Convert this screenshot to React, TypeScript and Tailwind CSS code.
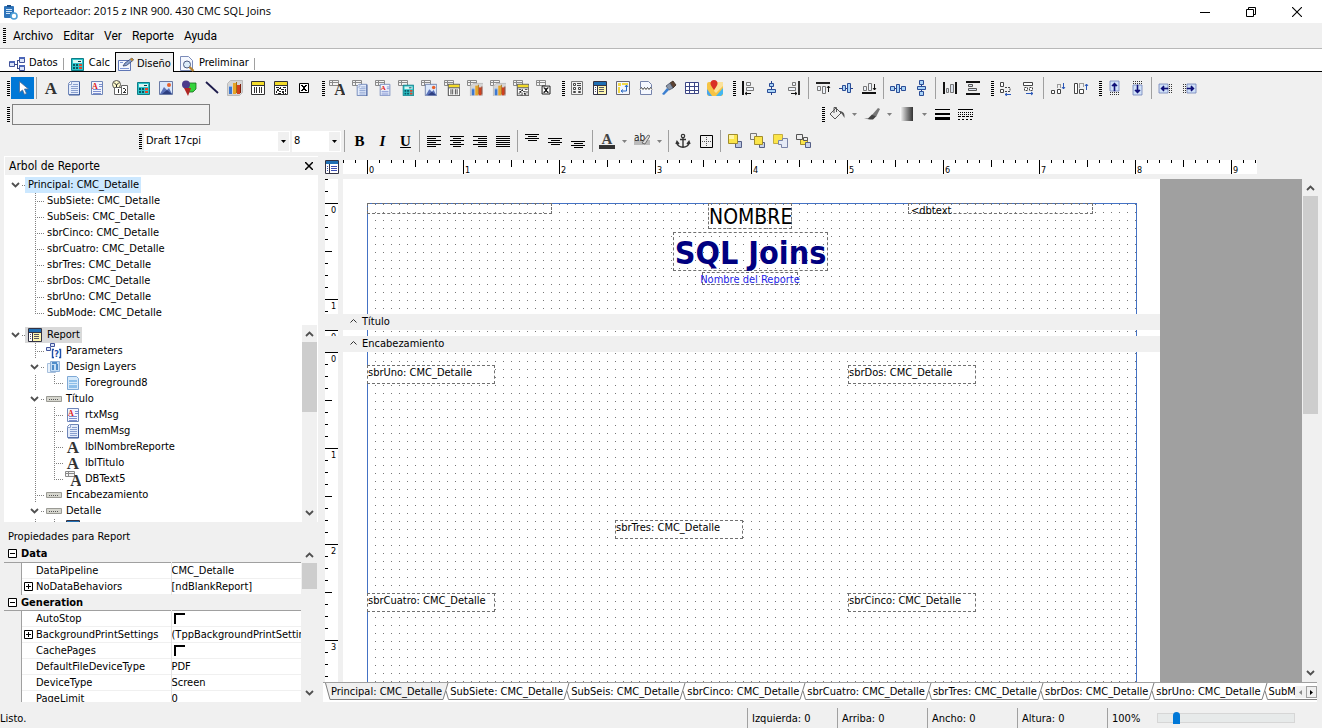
import type { ReactNode } from "react";
import clsx from "clsx";

const TAHOMA = "font-['DejaVu_Sans_Condensed','DejaVu_Sans',sans-serif]";
const SEGOE = "font-['Roboto','Noto_Sans',sans-serif]";

/* ---------- icons ---------- */

const letterA = (
  <text x="8" y="14" textAnchor="middle" fontSize="17" fontWeight="700" fontFamily="Liberation Serif, serif" fill="#333">A</text>
);

const page = (
  <>
    <path d="M4.500 1.500h9v13h-11v-11z" fill="#e4ecfb" stroke="#6f86b8" />
    <path d="M13.500 2v13H3" fill="none" stroke="#3f5c9c" />
    <path d="M2.500 4.500h3v-3" fill="#fff" stroke="#8fa3cc" />
  </>
);

const memo = (
  <>
    {page}
    <path d="M7 4.500h5M5 6.500h7M5 8.500h7M5 10.500h7M5 12.500h7" stroke="#8aa0cf" />
  </>
);

const rich = (
  <>
    <path d="M2.500 1.500h11v13h-11z" fill="#f2f5fd" stroke="#6f86b8" />
    <text x="6" y="8.500" textAnchor="middle" fontSize="8" fontWeight="700" fontFamily="Liberation Serif, serif" fill="#e01818">A</text>
    <path d="M10 4.500h3M10 6.500h3M4 9.500h8M4 11.500h8M4 13.500h8" stroke="#7d8fd0" />
  </>
);

const calc = (
  <>
    <path d="M2.500 2.500h12v12h-12z" fill="#2cc3c9" stroke="#0d7d87" />
    <path d="M4 4h9v3H4z" fill="#d8f5f2" />
    <path d="M9 5h3v1H9z" fill="#134" />
    <path d="M4 8h2v2H4zM7 8h2v2H7zM4 11h2v2H4zM7 11h2v2H7z" fill="#075763" />
    <path d="M10 8h3v2h-3zM10 11h3v2h-3z" fill="#e0472c" />
  </>
);

const image = (
  <>
    <path d="M1.500 1.500h13v13h-13z" fill="#dbe8fb" stroke="#6a7ba6" />
    <path d="M2 14l4-7 3 3 2-2 3 6z" fill="#5b72b8" />
    <path d="M4 14l5-4 5 4z" fill="#2d3f80" />
    <circle cx="11" cy="5" r="2" fill="#e8622c" />
  </>
);

const chart = (
  <>
    <path d="M.5 3.500l3-3h12v12l-3 3H.5z" fill="#d5d5d5" stroke="#bbb" />
    <path d="M2 7h3v7H2z" fill="#3d78d0" />
    <path d="M2 6h3v1H2z" fill="#8fb8ee" />
    <path d="M6 3h3v11H6z" fill="#e8a526" />
    <path d="M9 2h1v11H9z" fill="#a66d0c" />
    <path d="M10 5h3v9h-3z" fill="#d0411e" />
    <path d="M13 4h1v9h-1z" fill="#7e200b" />
  </>
);

const barcode = (
  <>
    <path d="M1.500 1.500h13v13h-13z" fill="#fff" stroke="#333" />
    <path d="M2 2h12v3H2z" fill="#f4dc2a" />
    <path d="M2 5.500h12M4.500 7v6M6.500 7v6M9.500 7v6M11.500 7v6" stroke="#333" fill="none" />
  </>
);

const barcode2d = (
  <>
    <path d="M1.500 1.500h13v13h-13z" fill="#fff" stroke="#333" />
    <path d="M2 2h12v3H2z" fill="#f4dc2a" />
    <path d="M2 5.500h12" stroke="#333" />
    <path d="M3 7h3v1H3zM7 7h1v2H7zM10 7h3v1h-3zM4 9h2v2H4zM8 9h3v1H8zM12 9h1v3h-1zM3 11h1v2H3zM6 11h2v1H6zM9 11h2v2H9zM5 13h3v1H5zM12 13h1v1h-1zM10 13h1v1h-1zM6 8h1v1H6z" fill="#222" />
  </>
);

const boxX = (
  <>
    <path d="M3.500 3.500h9v9h-9z" fill="#fff" stroke="#000" />
    <path d="M5 5h2v1H5zM9 5h2v1H9zM6 6h4v1H6zM7 7h2v2H7zM6 9h4v1H6zM5 10h2v1H5zM9 10h2v1H9z" fill="#000" />
  </>
);

const db = (base: ReactNode) => (
  <>
    <path d="M.5 .5h9v5h-9zM.5 2.500h9M3.500 1v4" fill="#f4f4f4" stroke="#8a8a8a" />
    <g transform="translate(3 3) scale(.88)">{base}</g>
  </>
);

const reportSheet = (
  <>
    <path d="M1.500 1.500h13v13h-13z" fill="#fdf6b0" stroke="#334" />
    <path d="M2 2h12v3H2z" fill="#1f6fb4" />
    <path d="M2 5.500h12M5.500 5v9" stroke="#334" />
    <path d="M2 6h3v8H2z" fill="#fff" />
    <path d="M7 7.500h5M7 9.500h5M7 11.500h5M3 7.500h1M3 9.500h1M3 11.500h1" stroke="#556" />
  </>
);

const blueSheet = (
  <>
    <path d="M1.500 1.500h13v13h-13z" fill="#fff" stroke="#334" />
    <path d="M2 2h12v3H2z" fill="#1f6fb4" />
    <path d="M5.500 5v9" stroke="#334" />
    <path d="M7 7.500h6M7 9.500h6M7 11.500h6M3 7.500h1M3 9.500h1M3 11.500h1" stroke="#3c4fb5" />
  </>
);

const tinyBox = "#a9d3f7";

const icons: Record<string, ReactNode> = {
  pointer: <path d="M5.500 1.500v11l3-2.500 2 4.500 2-1-2-4.500h4z" fill="#fff" stroke="#4c6a92" strokeWidth=".8" />,
  label: letterA,
  memo,
  rich,
  variable: (
    <>
      <circle cx="4.500" cy="4.500" r="4" fill="#fdf9c9" stroke="#555" />
      <path d="M4.500 7V5L2 2.500M4.500 5L7 2.500" stroke="#222" fill="none" />
      <path d="M2.500 7.500h7v7h-7zM9.500 5.500h6v9h-6z" fill="#fff" stroke="#666" />
      <path d="M6 9h1v4H6zM11 8h2v1h-2zM13 9h1v2h-1zM12 11h1v1h-1zM11 12h3v1h-3z" fill="#333" />
    </>
  ),
  calc,
  image,
  shape: (
    <>
      <path d="M7 3h8v6l-3 3H7z" fill="#35d43c" stroke="#186b1c" strokeWidth=".8" />
      <circle cx="5" cy="4.500" r="4" fill="#4b3a8c" />
      <path d="M3 8h7l-3 8z" fill="#b02525" />
    </>
  ),
  line: <path d="M2 2l12 11" stroke="#1d1b4c" strokeWidth="1.800" />,
  chart,
  barcode,
  barcode2d,
  boxX,
  dbLabel: db(<text x="9" y="14" textAnchor="middle" fontSize="18" fontWeight="700" fontFamily="Liberation Serif, serif" fill="#333">A</text>),
  dbMemo: db(memo),
  dbRich: db(rich),
  dbCalc: db(calc),
  dbImage: db(image),
  dbBarcode: db(barcode),
  dbChart: db(chart),
  db2d: db(barcode2d),
  dbBox: db(boxX),
  region: (
    <>
      <path d="M2.500 1.500h11v13h-11z" fill="#f2f2f2" stroke="#777" />
      <path d="M4.500 3.500h2v2h-2zM4.500 7.500h2v2h-2zM9.500 7.500h2v2h-2zM4.500 11.500h2v1h-2zM9.500 11.500h2v1h-2z" fill="#fff" stroke="#444" />
      <path d="M8 3.500h4M8 5.500h4" stroke="#444" />
    </>
  ),
  reportSheet,
  blueSheet,
  crosstab: (
    <>
      <path d="M1.500 1.500h13v13h-13z" fill="#f3f6fd" stroke="#667" />
      <path d="M3 3h3v3H3zM7 3h6v2H7zM3 7h2v6H3z" fill="#f2d848" />
      <path d="M11.500 5v6h-5M10 7l1.500-2L13 7M8 9.500L6 11l2 1.500" stroke="#2668c4" fill="none" />
    </>
  ),
  pageBreak: (
    <>
      <path d="M2.500 1.500h8l3 3v10h-11z" fill="#f5f8ff" stroke="#7583ab" />
      <path d="M2 8h12v2H2z" fill="#fff" />
      <path d="M2 9.500l1.500-2 1.500 2 1.500-2 1.500 2 1.500-2 1.500 2 1.500-2 1.500 2" stroke="#333" fill="none" strokeWidth=".9" />
    </>
  ),
  brush: (
    <>
      <path d="M9 3l3-2 3 4-3 3z" fill="#5d4332" stroke="#33241a" strokeWidth=".8" />
      <path d="M5 6l4-3 3 5-4 2z" fill="#8b96a8" stroke="#4a5363" strokeWidth=".8" />
      <path d="M6 8l2 2-5 5-2-1z" fill="#3b7fd0" />
    </>
  ),
  grid: <path d="M1.500 2.500h13v11h-13zM1.500 6.500h13M1.500 10.500h13M5.500 2.500v11M10.500 2.500v11" fill="#fff" stroke="#3c4685" />,
  map: (
    <>
      <rect x="0" y="2" width="16" height="14" rx="2" fill="#f6c445" />
      <path d="M9 16l7-8v6l-2 2z" fill="#43b7f0" />
      <path d="M0 9l5 7H2l-2-2z" fill="#48a6ee" />
      <path d="M10 2h6v4l-7 7-2-2z" fill="#fbe29a" />
      <path d="M7 10C4.500 6.500 3.500 5 3.500 3.500a3.500 3.500 0 017 0C10.500 5 9.500 6.500 7 10z" fill="#d93025" />
    </>
  ),
  alignLeft: (
    <>
      <path d="M2 1h2v14H2z" fill="#111" />
      <path d="M6.500 2.500h4v3h-4zM6.500 7.500h7v3h-7z" fill="#eef3fa" stroke="#777" />
      <path d="M5 13.500h6M7 12l-2 1.500L7 15" stroke="#111" fill="none" />
    </>
  ),
  alignMid: (
    <>
      <path d="M8 1h1v14H8z" fill="#24428c" />
      <path d="M6.500 3.500h4v3h-4zM4.500 9.500h8v3h-8z" fill={tinyBox} stroke="#2a4c96" />
    </>
  ),
  alignRight: (
    <>
      <path d="M12 1h2v14h-2z" fill="#333" />
      <path d="M6.500 2.500h3v3h-3zM2.500 7.500h7v3h-7z" fill="#eef3fa" stroke="#777" />
      <path d="M5 13.500h6M9 12l2 1.500L9 15" stroke="#111" fill="none" />
    </>
  ),
  alignTop: (
    <>
      <path d="M1 2h14v2H1z" fill="#222" />
      <path d="M2.500 6.500h3v4h-3zM7.500 6.500h3v7h-3z" fill="#eef3fa" stroke="#777" />
      <path d="M13.500 6v6M12 8l1.500-2L15 8" stroke="#111" fill="none" />
    </>
  ),
  alignCenterV: (
    <>
      <path d="M1 8h14v1H1z" fill="#24428c" />
      <path d="M4.500 5.500h3v5h-3zM9.500 3.500h3v9h-3z" fill={tinyBox} stroke="#2a4c96" />
    </>
  ),
  alignBottom: (
    <>
      <path d="M1 12h14v2H1z" fill="#111" />
      <path d="M2.500 6.500h3v4h-3zM7.500 3.500h3v7h-3z" fill="#eef3fa" stroke="#777" />
      <path d="M13.500 4v6M12 8l1.500 2L15 8" stroke="#111" fill="none" />
    </>
  ),
  centerH: (
    <>
      <path d="M1 8h14v1H1z" fill="#24428c" />
      <path d="M.5 6.500h4v4h-4zM6.500 4.500h3v8h-3zM11.500 6.500h4v4h-4z" fill={tinyBox} stroke="#2a4c96" />
    </>
  ),
  centerV: (
    <>
      <path d="M8 1h1v14H8z" fill="#24428c" />
      <path d="M6.500 .5h4v4h-4zM4.500 6.500h8v3h-8zM6.500 11.500h4v4h-4z" fill={tinyBox} stroke="#2a4c96" />
    </>
  ),
  spaceH: (
    <>
      <path d="M1 2h2v12H1zM13 2h2v12h-2z" fill="#111" />
      <path d="M4.500 8.500h2v4h-2zM8.500 4.500h3v8h-3z" fill="#dbe3ef" stroke="#777" />
    </>
  ),
  spaceV: (
    <>
      <path d="M1 1h14v2H1zM1 13h14v2H1z" fill="#111" />
      <path d="M3.500 4.500h4v2h-4zM3.500 8.500h8v2h-8z" fill="#dbe3ef" stroke="#555" />
    </>
  ),
  sameWidth: (
    <>
      <path d="M2.500 2.500h3v4h-3zM2.500 9.500h3v3h-3z" fill="#fff" stroke="#444" />
      <path d="M7 7.500h5v4H7" fill="none" stroke="#444" strokeDasharray="2 1" />
      <path d="M7 14.500h6M9 13l-2 1.500L9 16" stroke="#2a57b8" fill="none" />
    </>
  ),
  sameWidth2: (
    <>
      <path d="M2.500 2.500h9v3h-9z" fill="#fff" stroke="#444" />
      <path d="M3.500 7.500h3v3h-3zM8.500 7.500h3v3h-3z" fill="#fff" stroke="#444" strokeDasharray="2 1" />
      <path d="M5 13.500h7M10 12l2 1.500-2 1.500" stroke="#2a57b8" fill="none" />
    </>
  ),
  sameHeight: (
    <>
      <path d="M1.500 10.500h3v3h-3zM7.500 9.500h3v4h-3z" fill="#fff" stroke="#444" />
      <path d="M7.500 7.500v-3h3v3" fill="none" stroke="#444" strokeDasharray="1 1" />
      <path d="M13.500 3v6M12 7l1.500 2L15 7" stroke="#2a57b8" fill="none" />
    </>
  ),
  sameHeight2: (
    <>
      <path d="M1.500 3.500h3v10h-3zM6.500 9.500h4v4h-4z" fill="#fff" stroke="#444" />
      <path d="M6.500 7.500v-4h4v4" fill="none" stroke="#444" strokeDasharray="1 1" />
      <path d="M13.500 4v6M12 6l1.500-2L15 6" stroke="#2a57b8" fill="none" />
    </>
  ),
  nudgeUp: (
    <>
      <path d="M4 1h9v10H4z" fill="#cfe0f7" stroke="#6f82b8" strokeWidth=".8" />
      <path d="M4 12.500h9M4 14.500h9" stroke="#333" strokeDasharray="1 1" />
      <path d="M8 5h1v6H8zM7 4h3v1H7zM6 5h5v1H6zM8 3h1v1H8z" fill="#10107a" stroke="#10107a" strokeWidth=".6" />
    </>
  ),
  nudgeDown: (
    <>
      <path d="M4 5h9v10H4z" fill="#cfe0f7" stroke="#6f82b8" strokeWidth=".8" />
      <path d="M4 1.500h9M4 3.500h9" stroke="#333" strokeDasharray="1 1" />
      <path d="M8 5h1v6H8zM6 10h5v1H6zM7 11h3v1H7zM8 12h1v1H8z" fill="#10107a" stroke="#10107a" strokeWidth=".6" />
    </>
  ),
  nudgeLeft: (
    <>
      <path d="M1 4h9v9H1z" fill="#cfe0f7" stroke="#6f82b8" strokeWidth=".8" />
      <path d="M11.500 4v9M13.500 4v9" stroke="#333" strokeDasharray="1 1" />
      <path d="M4 8h6v1H4zM4 7h1v3H4zM5 6h1v5H5zM3 8h1v1H3z" fill="#10107a" stroke="#10107a" strokeWidth=".6" />
    </>
  ),
  nudgeRight: (
    <>
      <path d="M6 4h9v9H6z" fill="#cfe0f7" stroke="#6f82b8" strokeWidth=".8" />
      <path d="M2.500 4v9M4.500 4v9" stroke="#333" strokeDasharray="1 1" />
      <path d="M6 8h6v1H6zM11 7h1v3h-1zM10 6h1v5h-1zM12 8h1v1h-1z" fill="#10107a" stroke="#10107a" strokeWidth=".6" />
    </>
  ),
  bucket: (
    <>
      <path d="M1 8l6-6 5 5-6 6z" fill="#eee" stroke="#555" />
      <path d="M5 7V1.500h2.500V6" fill="none" stroke="#555" />
      <path d="M10 5c4 0 6 2 5.500 7L13 8z" fill="#555" />
    </>
  ),
  pen: (
    <>
      <path d="M8 9l6-7 2 1-4 8z" fill="#777" />
      <path d="M0 12.500h4l4-4 4 2-3 3H6z" fill="#444" />
    </>
  ),
  lines: <path d="M1 3h15v1H1zM1 7h15v2H1zM1 11h15v3H1z" fill="#000" />,
  dashes: (
    <>
      <path d="M1 3h15v1H1z" fill="#000" />
      <path d="M1 6.500h15M1 8.500h15" stroke="#000" strokeDasharray="1 1" />
      <path d="M1 10.500h15" stroke="#000" strokeDasharray="3 1" />
      <path d="M1 13.500h15" stroke="#000" strokeDasharray="2 2" />
    </>
  ),
  textLeft: <path d="M1 3.500h14M1 5.500h9M1 7.500h14M1 9.500h9M1 11.500h14M1 13.500h9" stroke="#000" />,
  textCenter: <path d="M1 3.500h14M4 5.500h8M1 7.500h14M4 9.500h8M1 11.500h14M4 13.500h8" stroke="#000" />,
  textRight: <path d="M1 3.500h14M6 5.500h9M1 7.500h14M6 9.500h9M1 11.500h14M6 13.500h9" stroke="#000" />,
  textFull: <path d="M1 3.500h14M1 5.500h14M1 7.500h14M1 9.500h14M1 11.500h14M1 13.500h14" stroke="#000" />,
  vTop: <path d="M1 1.500h14M4 3.500h9M1 5.500h14M4 7.500h9" stroke="#000" />,
  vMid: <path d="M1 5.500h14M4 7.500h9M1 9.500h14M4 11.500h9" stroke="#000" />,
  vBottom: <path d="M1 8.500h14M4 10.500h9M1 12.500h14M4 14.500h9" stroke="#000" />,
  fontColor: (
    <>
      <text x="8" y="11" textAnchor="middle" fontSize="15" fontWeight="700" fontFamily="Liberation Serif, serif" fill="#444">A</text>
      <path d="M0 12h16v4H0z" fill="#333" />
    </>
  ),
  highlight: (
    <>
      <path d="M0 7h16v5H0z" fill="#bbb" />
      <text x="0" y="8" fontSize="10" fontFamily="DejaVu Sans Condensed, sans-serif" fill="#222">ab</text>
      <path d="M8 10l6-8 2 1-5 8z" fill="#ddd" stroke="#555" strokeWidth=".8" />
    </>
  ),
  anchor: (
    <>
      <circle cx="8" cy="3" r="1.700" fill="none" stroke="#333" strokeWidth="1.200" />
      <path d="M8 5v9M5 6.500h6M2 9.500c0 3 3 4.800 6 4.800s6-1.800 6-4.800M1 11l1-2.500L4 11M12 11l2-2.500 1 2.500" fill="none" stroke="#333" strokeWidth="1.400" />
    </>
  ),
  border: (
    <>
      <path d="M2.500 2.500h12v12h-12z" fill="none" stroke="#000" />
      <path d="M8.500 4v9M4 8.500h9" stroke="#555" strokeDasharray="1 1" />
    </>
  ),
  toFront: (
    <>
      <path d="M8.500 8.500h6v6h-6z" fill="#b9c4e2" stroke="#555f86" />
      <path d="M1.500 1.500h9v9h-9z" fill="#fbe54a" stroke="#a08c2c" />
      <path d="M2 2h5v4H2z" fill="#fff6a8" />
    </>
  ),
  toBack: (
    <>
      <path d="M.5 .5h6v6h-6z" fill="#eee" stroke="#777" />
      <path d="M9.500 9.500h5v5h-5z" fill="#c9d3ea" stroke="#555f86" />
      <path d="M4.500 3.500h8v8h-8z" fill="#fbe54a" stroke="#a08c2c" />
    </>
  ),
  forward: (
    <>
      <path d="M.5 1.500h9v9h-9z" fill="#fbe54a" stroke="#c4ad40" />
      <path d="M5.500 7.500h4v-2h5v9h-6v-3h-3z" fill="#e6ebf6" stroke="#7a84a8" />
    </>
  ),
  backward: (
    <>
      <path d="M4.500 5.500h7v6h-7z" fill="#fbe54a" stroke="#a08c2c" />
      <path d="M.5 1.500h6v5h-6zM7.500 4.500h4v3h-4z" fill="#eee" stroke="#555" />
      <path d="M9.500 9.500h5v5h-5z" fill="#c9d3ea" stroke="#555f86" />
    </>
  ),
  data: (
    <>
      <path d="M6 8.500h3M8.500 4v9M8 4.500h2M8 12.500h2" stroke="#3a4a86" fill="none" />
      <path d="M.5 5.500h5v5h-5zM10.500 1.500h5v5h-5zM10.500 9.500h5v5h-5z" fill="#dce6fa" stroke="#41539a" />
      <path d="M1 5h5v2H1zM10 1h6v2h-6zM10 9h6v2h-6z" fill="#4c66b8" />
    </>
  ),
  design: (
    <>
      <path d="M.5 3.500h12v10H.5z" fill="#f3f7ff" stroke="#5f76b5" />
      <path d="M2 11.500h9M2 5.500h3" stroke="#7f97d4" />
      <path d="M5 9l2-3 7-5 1.500 2-7 5.500z" fill="#8aa2cf" stroke="#34446f" strokeWidth=".8" />
      <path d="M12 2l2-1 1.500 2-2 1z" fill="#c38a2b" />
    </>
  ),
  preview: (
    <>
      <path d="M1.500 .5h8l4 4v10h-12z" fill="#f5f8ff" stroke="#7b8bb8" />
      <circle cx="8" cy="8.500" r="3.500" fill="#dcecf9" stroke="#4b5a80" />
      <path d="M10.500 11l4 4" stroke="#b7832f" strokeWidth="2.400" />
    </>
  ),
  app: (
    <>
      <rect x="2" y="2" width="10" height="12" rx="1" fill="#2f74ba" />
      <path d="M5 1h4v2H5z" fill="#1b4f8a" />
      <path d="M4 5h6v1H4zM4 7h6v1H4zM4 9h4v1H4z" fill="#cfe5f8" />
      <circle cx="12" cy="12" r="3" fill="#fff" stroke="#4e9fd6" strokeWidth="1.600" />
    </>
  ),
  params: (
    <>
      <path d="M4.500 .5h4v3h-4zM.5 4.500h4v3h-4z" fill="#dce6fa" stroke="#41539a" />
      <path d="M8 6.500H6.500v8H8M13 6.500h1.500v8H13" fill="none" stroke="#1e4fa8" strokeWidth="1.400" />
      <text x="10.500" y="13.500" textAnchor="middle" fontSize="9" fontWeight="700" fontFamily="DejaVu Sans Condensed, sans-serif" fill="#1e4fa8">?</text>
    </>
  ),
  layers: (
    <>
      <path d="M1.500 4.500h8v9h-8z" fill="#e8f2fc" stroke="#a7bfdc" />
      <path d="M4.500 2.500h9v10h-9z" fill="#c5def5" stroke="#8fb1d8" />
      <path d="M6 6h2v5H6zM10 5h2v6h-2zM6 3h5v2H6z" fill="#4f8cc9" />
    </>
  ),
  layer: (
    <>
      <path d="M2.500 1.500h9l2 2v11h-11z" fill="#d5e9fa" stroke="#7fa9d6" />
      <path d="M4 5h8v8H4z" fill="#8ebfe9" />
      <path d="M4 7.500h8M4 9.500h8" stroke="#d5e9fa" />
    </>
  ),
  band: (
    <>
      <path d="M.5 5.500h15v5H.5z" fill="#d6d6ce" stroke="#9a9a94" />
      <path d="M3 8.500h9" stroke="#555" strokeDasharray="1 1" />
    </>
  ),
};

function Icon({ name, className }: { name: string; className?: string }) {
  return (
    <svg width="16" height="16" viewBox="0 0 16 16" className={clsx("shrink-0", className)} aria-hidden="true">
      {icons[name]}
    </svg>
  );
}

function Chevron({ dir = "down", className }: { dir?: "up" | "down"; className?: string }) {
  return (
    <svg width="9" height="9" viewBox="0 0 9 9" className={className} aria-hidden="true">
      <path d={dir === "down" ? "M1 2l3.500 3.500L8 2" : "M1 7l3.500-3.500L8 7"} fill="none" stroke="#505050" strokeWidth="1.800" />
    </svg>
  );
}

/* ---------- toolbar parts ---------- */

function Grip({ narrow }: { narrow?: boolean }) {
  return (
    <span className={clsx("flex shrink-0 justify-end pr-px", narrow ? "w-[7px]" : "w-[10px]")}>
      <span className="h-[15px] w-[3px] bg-[repeating-linear-gradient(#000_0_1px,transparent_1px_2px)]" />
    </span>
  );
}

function Separator() {
  return (
    <span className="flex w-1.5 shrink-0 pl-0.5">
      <span className="h-[22px] w-px bg-[#a0a0a0]" />
    </span>
  );
}

function ToolButton({ icon, active }: { icon: string; active?: boolean }) {
  return (
    <button type="button" aria-label={icon} className={clsx("flex h-[22px] w-[23px] shrink-0 items-center pl-[3px]", active && "bg-[#0078d7]")}>
      <Icon name={icon} />
    </button>
  );
}

function DropArrow({ label }: { label: string }) {
  return (
    <button type="button" aria-label={label} className="flex h-[22px] w-3 shrink-0 items-center pl-[3px]">
      <svg width="5" height="3" viewBox="0 0 5 3"><path d="M0 0h5L2.500 3z" fill="#808080" /></svg>
    </button>
  );
}

function Tools({ items }: { items: string }) {
  return (
    <>
      {items.split(" ").map((item, i) => {
        if (item === ":") return <Grip key={i} />;
        if (item === "|") return <Separator key={i} />;
        if (item === "v") return <DropArrow key={i} label="Opciones" />;
        return <ToolButton key={i} icon={item} active={item === "pointer"} />;
      })}
    </>
  );
}

function Combo({ label, value, className }: { label: string; value: string; className: string }) {
  return (
    <div className={clsx("relative h-[21px] shrink-0 bg-white", className)}>
      <select aria-label={label} defaultValue={value} className="h-full w-full appearance-none pl-0.5 leading-[20px] text-black outline-none">
        <option>{value}</option>
      </select>
      <span className="pointer-events-none absolute inset-y-px right-px flex w-[11px] items-center justify-center bg-[#f0f0f0]">
        <svg width="5" height="3" viewBox="0 0 5 3"><path d="M0 0h5L2.500 3z" fill="#000" /></svg>
      </span>
    </div>
  );
}

function TextStyle({ label, children }: { label: string; children: ReactNode }) {
  return (
    <button type="button" aria-label={label} className="h-[22px] w-[23px] shrink-0 text-center [font-family:'Liberation_Serif',serif] text-[15px] leading-[22px] font-bold">
      {children}
    </button>
  );
}

function ScrollBar({ thumb, className }: { thumb: string; className?: string }) {
  return (
    <div className={clsx("flex w-[15px] shrink-0 flex-col items-center bg-[#f0f0f0]", className)}>
      <Chevron dir="up" className="my-1 shrink-0" />
      <div className={clsx("w-full shrink-0 bg-[#cdcdcd]", thumb)} />
      <Chevron className="mt-auto mb-1 shrink-0" />
    </div>
  );
}

/* ---------- trees ---------- */

type Guide = "none" | "line" | "tee" | "end" | "open";

function GuideCell({ kind }: { kind: Guide }) {
  if (kind === "open") {
    return (
      <span className="flex h-4 w-[19px] shrink-0 items-center">
        <Chevron className="ml-[5px]" />
        <svg width="4" height="1" className="ml-auto"><path d="M1 .5h3" stroke="#808080" strokeDasharray="1 1" /></svg>
      </span>
    );
  }
  return (
    <svg width="19" height="16" className="shrink-0">
      {kind !== "none" && <path d={kind === "end" ? "M10.500 0v8" : "M10.500 0v16"} stroke="#808080" strokeDasharray="1 1" />}
      {(kind === "tee" || kind === "end") && <path d="M10 8.500h9" stroke="#808080" strokeDasharray="1 1" />}
    </svg>
  );
}

interface Node {
  text: string;
  guides: Guide[];
  icon?: string;
  highlight?: string;
}

const subReports: Node[] = [
  { text: "Principal: CMC_Detalle", guides: ["open"], highlight: "bg-[#cce8ff]" },
  ...["SubSiete", "SubSeis", "sbrCinco", "sbrCuatro", "sbrTres", "sbrDos", "sbrUno"].map((n) => ({
    text: `${n}: CMC_Detalle`,
    guides: ["none", "tee"] as Guide[],
  })),
  { text: "SubMode: CMC_Detalle", guides: ["none", "end"] },
];

const components: Node[] = [
  { text: "Report", guides: ["open"], icon: "reportSheet", highlight: "bg-[#d9d9d9]" },
  { text: "Parameters", guides: ["none", "tee"], icon: "params" },
  { text: "Design Layers", guides: ["none", "open"], icon: "layers" },
  { text: "Foreground8", guides: ["none", "line", "end"], icon: "layer" },
  { text: "Título", guides: ["none", "open"], icon: "band" },
  { text: "rtxMsg", guides: ["none", "line", "tee"], icon: "rich" },
  { text: "memMsg", guides: ["none", "line", "tee"], icon: "memo" },
  { text: "lblNombreReporte", guides: ["none", "line", "tee"], icon: "label" },
  { text: "lblTitulo", guides: ["none", "line", "tee"], icon: "label" },
  { text: "DBText5", guides: ["none", "line", "end"], icon: "dbLabel" },
  { text: "Encabezamiento", guides: ["none", "tee"], icon: "band" },
  { text: "Detalle", guides: ["none", "open"], icon: "band" },
  { text: "sbrUno", guides: ["none", "line", "tee"], icon: "blueSheet" },
];

function Tree({ nodes }: { nodes: Node[] }) {
  return (
    <ul className="min-w-0 flex-1 overflow-hidden pt-0.5 pl-0.5">
      {nodes.map((n) => (
        <li key={n.text} className="flex h-4 items-center">
          {n.guides.map((g, i) => <GuideCell key={i} kind={g} />)}
          <span className={clsx("flex h-4 items-center pr-0.5 leading-4 whitespace-nowrap", n.icon ? "pl-0.5" : "pl-[3px]", n.highlight)}>
            {n.icon && <Icon name={n.icon} className="mr-1" />}
            {n.text}
          </span>
        </li>
      ))}
    </ul>
  );
}

/* ---------- property grid ---------- */

interface Prop {
  name: string;
  value?: string;
  expand?: boolean;
}

const groups: { title: string; props: Prop[] }[] = [
  {
    title: "Data",
    props: [
      { name: "DataPipeline", value: "CMC_Detalle" },
      { name: "NoDataBehaviors", value: "[ndBlankReport]", expand: true },
    ],
  },
  {
    title: "Generation",
    props: [
      { name: "AutoStop" },
      { name: "BackgroundPrintSettings", value: "(TppBackgroundPrintSettings)", expand: true },
      { name: "CachePages" },
      { name: "DefaultFileDeviceType", value: "PDF" },
      { name: "DeviceType", value: "Screen" },
      { name: "PageLimit", value: "0" },
    ],
  },
];

function Expander({ open, label }: { open?: boolean; label: string }) {
  return (
    <button type="button" aria-label={label} className="block size-[9px]">
      <svg width="9" height="9" viewBox="0 0 9 9">
        <path d="M.5 .5h8v8h-8z" fill="#fff" stroke="#000" />
        <path d={open ? "M2 4.500h5" : "M2 4.500h5M4.500 2v5"} stroke="#000" />
      </svg>
    </button>
  );
}

function PropertyGrid() {
  return (
    <table className="w-full table-fixed border-collapse text-left">
      <colgroup>
        <col className="w-[17px]" />
        <col className="w-[14px]" />
        <col className="w-[136px]" />
        <col />
      </colgroup>
      {groups.map((g, i) => (
        <tbody key={g.title}>
          <tr className={clsx("h-4 border-b border-[#a0a0a0] bg-[#f0f0f0]", i > 0 && "border-t")}>
            <td className="p-0 pl-1"><Expander open label={g.title} /></td>
            <th colSpan={3} className="p-0 leading-[15px] font-bold">{g.title}</th>
          </tr>
          {g.props.map((p) => (
            <tr key={p.name} className="h-4 border-b border-[#f0f0f0]">
              <td className="border-r border-[#a0a0a0] bg-[#f0f0f0] p-0" />
              <td className="p-0 pl-0.5">{p.expand && <Expander label={p.name} />}</td>
              <td className="border-r border-[#e4e4e4] p-0 pl-px leading-[15px] whitespace-nowrap">{p.name}</td>
              <td className="overflow-hidden p-0 leading-[15px] whitespace-nowrap">
                {p.value ?? (
                  <input type="checkbox" aria-label={p.name} className="ml-0.5 block size-[11px] appearance-none border-t-2 border-l-2 border-black" />
                )}
              </td>
            </tr>
          ))}
        </tbody>
      ))}
    </table>
  );
}

/* ---------- design surface ---------- */

const tickLength = (i: number, full: number) => (i % 8 === 0 ? full : i % 4 === 0 ? 7 : 3);

function HorizontalRuler() {
  return (
    <svg className="h-[14px] w-[914px] shrink-0 bg-white">
      {Array.from({ length: 77 }, (_, k) => k - 2).map((i) => (
        <g key={i}>
          <rect x={24 + i * 12} y="0" width="1" height={tickLength(i, 14)} />
          {i >= 0 && i % 8 === 0 && <text x={26 + i * 12} y="13" fontSize="9" className={TAHOMA}>{i / 8}</text>}
        </g>
      ))}
    </svg>
  );
}

function VerticalRuler({ start }: { start: number }) {
  return (
    <div className="relative w-[13px] shrink-0 overflow-hidden bg-white">
      <svg className="absolute inset-0 h-full w-full">
        {Array.from({ length: 90 }, (_, k) => k - 2).map((i) => (
          <g key={i}>
            <rect x="0" y={start + i * 12} width={tickLength(i, 13)} height="1" />
            {i >= 0 && i % 8 === 0 && <text x="6" y={start + 10 + i * 12} fontSize="9" className={TAHOMA}>{i / 8}</text>}
          </g>
        ))}
      </svg>
    </div>
  );
}

function Band({ start, className, children }: { start: number; className: string; children?: ReactNode }) {
  return (
    <div className={clsx("flex gap-[5px] overflow-hidden", className)}>
      <VerticalRuler start={start} />
      <div className={clsx("flex flex-1 bg-white pl-6", start > 0 && "pt-6")}>
        <div
          className={clsx(
            "relative w-[770px] border-x border-[#4472c4] bg-[conic-gradient(at_1px_1px,transparent_75%,#777_0)] bg-[size:8px_8px]",
            start > 0 ? "border-t bg-[position:7px_0px]" : "bg-[position:7px_1px]"
          )}
        >
          {children}
        </div>
      </div>
    </div>
  );
}

function BandBar({ text }: { text: string }) {
  return (
    <div className="flex h-4 shrink-0 items-center gap-1 bg-[#f0f0f0] pl-6">
      <svg width="9" height="9" viewBox="0 0 9 9"><path d="M1.500 4.500l3-3 3 3" fill="none" stroke="#333" /></svg>
      <span className="leading-4">{text}</span>
    </div>
  );
}

function Item({ className, children }: { className: string; children?: ReactNode }) {
  return <div className={clsx("absolute border border-dashed border-[#707070] whitespace-nowrap", className)}>{children}</div>;
}

function SubReport({ name, className }: { name: string; className: string }) {
  return <Item className={clsx("h-[19px] w-32 bg-white leading-[13px]", className)}>{name}: CMC_Detalle</Item>;
}

function Surface() {
  return (
    <div className="flex min-h-0 flex-1">
      <div className="flex w-[835px] shrink-0 flex-col">
        <Band start={24} className="h-[135px] shrink-0">
          <Item className="-top-px -left-px h-[11px] w-[185px]" />
          <Item className="-top-px left-[340px] h-[26px] w-[84px] text-center text-[21px] leading-[26px]">NOMBRE</Item>
          <Item className="top-7 left-[305px] h-[39px] w-[155px] text-center text-[32px] leading-[40px] font-bold text-[#000080]">SQL Joins</Item>
          <Item className="top-[68px] left-[334px] flex h-[13px] w-24 justify-center leading-[14px] text-[#2424e8]">Nombre del Reporte</Item>
          <Item className="-top-px left-[540px] h-[11px] w-[185px] pl-0.5 leading-[14px]">&lt;dbtext</Item>
        </Band>
        <BandBar text="Título" />
        <Band start={0} className="h-1.5 shrink-0" />
        <BandBar text="Encabezamiento" />
        <Band start={0} className="min-h-0 flex-1">
          <SubReport name="sbrUno" className="top-[13px] -left-px" />
          <SubReport name="sbrDos" className="top-[13px] left-[480px]" />
          <SubReport name="sbrTres" className="top-[168px] left-[247px]" />
          <SubReport name="sbrCuatro" className="top-[241px] -left-px" />
          <SubReport name="sbrCinco" className="top-[241px] left-[480px]" />
        </Band>
      </div>
      <div className="flex-1 bg-[#a0a0a0]" />
      <ScrollBar thumb="h-[218px]" className="ml-px" />
    </div>
  );
}

const sheets = ["Principal", "SubSiete", "SubSeis", "sbrCinco", "sbrCuatro", "sbrTres", "sbrDos", "sbrUno", "SubMode"];

function SheetTabs() {
  return (
    <div className="relative flex h-5 shrink-0 overflow-hidden border-t border-[#a0a0a0] bg-white pl-0.5">
      <svg width="6" height="17" className="shrink-0"><path d="M0 0h6v16.500H5z" fill="#f0f0f0" /><path d="M.5 0L5 16.500h1" fill="none" stroke="#808080" /></svg>
      {sheets.map((s, i) => (
        <div key={s} className="flex shrink-0">
          <button type="button" className={clsx("h-[17px] border-b border-[#808080] leading-[17px] whitespace-nowrap", i === 0 && "bg-[#f0f0f0]")}>
            {s}: CMC_Detalle
          </button>
          <svg width="8" height="17">
            {i === 0 && <path d="M0 0h6L1.500 16H0z" fill="#f0f0f0" />}
            <path d="M0 16.500h1L6 0M4 8l2.500 8.500H8" fill="none" stroke="#808080" />
          </svg>
        </div>
      ))}
      <div className="absolute top-[3px] right-0 flex bg-white">
        <button type="button" aria-label="Anterior" className="flex h-3 w-[11px] items-center justify-center bg-[#f0f0f0]">
          <svg width="3" height="5"><path d="M3 0v5L0 2.500z" fill="#888" /></svg>
        </button>
        <button type="button" aria-label="Siguiente" className="flex h-3 w-[11px] items-center justify-center border border-[#a0a0a0] bg-[#f0f0f0]">
          <svg width="3" height="5"><path d="M0 0v5l3-2.500z" fill="#000" /></svg>
        </button>
      </div>
    </div>
  );
}

/* ---------- window ---------- */

function ViewTab({ icon, text, active }: { icon: string; text: string; active?: boolean }) {
  return (
    <button
      type="button"
      className={clsx(
        "flex h-full shrink-0 items-center pt-1",
        active ? "gap-[3px] border-x border-t border-black bg-[#f0f0f0] px-0.5" : "gap-1 border-b border-black px-[5px]"
      )}
    >
      <Icon name={icon} />
      {text}
    </button>
  );
}

function ViewTabs() {
  return (
    <div className="flex h-6 shrink-0 border-t border-[#b8b8b8] bg-white pt-[3px]">
      <span className="w-1 border-b border-black" />
      <ViewTab icon="data" text="Datos" />
      <span className="flex items-center border-b border-black pt-1"><span className="h-3 w-px bg-[#a0a0a0]" /></span>
      <ViewTab icon="calc" text="Calc" />
      <ViewTab icon="design" text="Diseño" active />
      <ViewTab icon="preview" text="Preliminar" />
      <span className="flex flex-1 items-center border-b border-black pt-1"><span className="h-3 w-px bg-[#a0a0a0]" /></span>
    </div>
  );
}

function StatusCell({ text, className }: { text: string; className?: string }) {
  return <div className={clsx("flex h-5 items-center border-l border-[#a0a0a0] pt-0.5 pl-1", className)}>{text}</div>;
}

export default function App() {
  return (
    <div className={clsx("flex h-screen flex-col overflow-hidden bg-[#f0f0f0] text-[11px] text-black", TAHOMA)}>
      <header className="flex h-[23px] shrink-0 items-center bg-white px-0.5">
        <Icon name="app" />
        <h1 className="ml-[5px] font-['Open_Sans','Noto_Sans',sans-serif]">Reporteador: 2015 z INR 900. 430 CMC SQL Joins</h1>
        <div className="ml-auto flex">
          <button type="button" aria-label="Minimizar" className="flex h-[22px] w-[46px] items-center justify-center">
            <svg width="10" height="10"><path d="M0 5.500h10" stroke="#000" /></svg>
          </button>
          <button type="button" aria-label="Restaurar" className="flex h-[22px] w-[46px] items-center justify-center">
            <svg width="10" height="10"><path d="M.5 2.500h7v7h-7zM2.500 2.500v-2h7v7h-2" fill="none" stroke="#000" /></svg>
          </button>
          <button type="button" aria-label="Cerrar" className="flex h-[22px] w-[46px] items-center justify-center">
            <svg width="10" height="10"><path d="M0 0l10 10M10 0L0 10" stroke="#000" strokeWidth="1.100" /></svg>
          </button>
        </div>
      </header>

      <nav className={clsx("flex h-[25px] shrink-0 items-center text-[12px]", SEGOE)}>
        <Grip narrow />
        <div className="flex gap-2.5 pl-1.5">
          {["Archivo", "Editar", "Ver", "Reporte", "Ayuda"].map((m) => <button key={m} type="button">{m}</button>)}
        </div>
      </nav>

      <ViewTabs />

      <div className="mt-[5px] flex h-[22px] shrink-0 items-center pl-px">
        <Tools items=": pointer | label memo rich variable calc image shape line chart barcode barcode2d boxX : dbLabel dbMemo dbRich dbCalc dbImage dbBarcode dbChart dbChart db2d dbBox : region reportSheet crosstab pageBreak brush grid map : alignLeft alignMid alignRight | alignTop alignCenterV alignBottom | centerH centerV | spaceH spaceV : sameWidth sameWidth2 | sameHeight sameHeight2 : nudgeUp nudgeDown | nudgeLeft nudgeRight" />
      </div>
      <div className="mt-1 flex h-[22px] shrink-0 items-center pl-px">
        <Grip />
        <input aria-label="Contenido" readOnly className="ml-px h-[21px] w-[198px] border border-[#808080] bg-[#f0f0f0] px-1" />
        <div className="flex items-center pl-[606px]">
          <Tools items=": bucket v pen v" />
          <button type="button" aria-label="Degradado" className="flex h-[22px] w-[23px] items-center pl-1">
            <span className="h-[14px] w-[13px] bg-linear-to-r from-white to-[#333]" />
          </button>
          <Tools items="v lines dashes" />
        </div>
      </div>
      <div className="mt-[5px] flex h-[22px] shrink-0 items-center pl-[133px]">
        <Grip />
        <Combo label="Fuente" value="Draft 17cpi" className="ml-px w-[146px]" />
        <Combo label="Tamaño" value="8" className="ml-0.5 w-[49px]" />
        <span className="w-px" />
        <Separator />
        <TextStyle label="Negrita">B</TextStyle>
        <TextStyle label="Cursiva"><i>I</i></TextStyle>
        <TextStyle label="Subrayado"><u>U</u></TextStyle>
        <Tools items="| textLeft textCenter textRight textFull | vTop vMid vBottom | fontColor v highlight v | anchor border | toFront toBack forward backward" />
      </div>

      <div className="flex min-h-0 flex-1 pt-1 pr-1">
        <aside className="flex w-[318px] shrink-0 flex-col pl-1">
          <div className="flex h-[19px] shrink-0 items-center border-t border-l border-white pr-[3px] pl-1">
            <h2 className="text-[12px]">Arbol de Reporte</h2>
            <button type="button" aria-label="Cerrar panel" className="ml-auto flex size-3 items-center justify-center">
              <svg width="8" height="8"><path d="M0 0l8 8M8 0L0 8" stroke="#000" strokeWidth="1.500" /></svg>
            </button>
          </div>
          <div className="flex h-[150px] shrink-0 bg-white"><Tree nodes={subReports} /></div>
          <div className="flex h-[197px] shrink-0 overflow-hidden bg-white">
            <Tree nodes={components} />
            <ScrollBar thumb="h-[70px]" className="mr-px" />
          </div>
          <h2 className="mt-0.5 h-[22px] shrink-0 pl-1 leading-[26px]">Propiedades para Report</h2>
          <div className="mb-px flex min-h-0 flex-1 overflow-hidden">
            <div className="min-w-0 flex-1 overflow-hidden bg-white"><PropertyGrid /></div>
            <ScrollBar thumb="h-[26px]" className="mr-px ml-px" />
          </div>
        </aside>

        <main className="flex min-w-0 flex-1 flex-col">
          <div className="mb-[5px] flex h-[18px] shrink-0 items-end gap-1 pl-[7px]">
            <svg width="14" height="14" viewBox="1 1 14 14" className="shrink-0" aria-hidden="true">{blueSheet}</svg>
            <HorizontalRuler />
          </div>
          <div className="flex min-h-0 flex-1 flex-col pl-[7px]"><Surface /></div>
          <div className="mb-px pr-px pl-[5px]"><SheetTabs /></div>
        </main>
      </div>

      <footer className="flex h-[25px] shrink-0 items-end">
        <span className="flex h-5 flex-1 items-center pt-0.5">Listo.</span>
        <StatusCell text="Izquierda: 0" className="w-[90px]" />
        <StatusCell text="Arriba: 0" className="w-[90px]" />
        <StatusCell text="Ancho: 0" className="w-[90px]" />
        <StatusCell text="Altura: 0" className="w-[90px]" />
        <StatusCell text="100%" className="w-[50px]" />
        <div className="flex h-5 w-[165px] items-center">
          <input
            type="range"
            aria-label="Zoom"
            min={0}
            max={100}
            defaultValue={12}
            className="h-2.5 w-[138px] appearance-none border border-[#d6d6d6] bg-[#e7eaea] [&::-webkit-slider-thumb]:h-3 [&::-webkit-slider-thumb]:w-[7px] [&::-webkit-slider-thumb]:appearance-none [&::-webkit-slider-thumb]:rounded-t-full [&::-webkit-slider-thumb]:bg-[#0078d7]"
          />
        </div>
      </footer>
    </div>
  );
}
